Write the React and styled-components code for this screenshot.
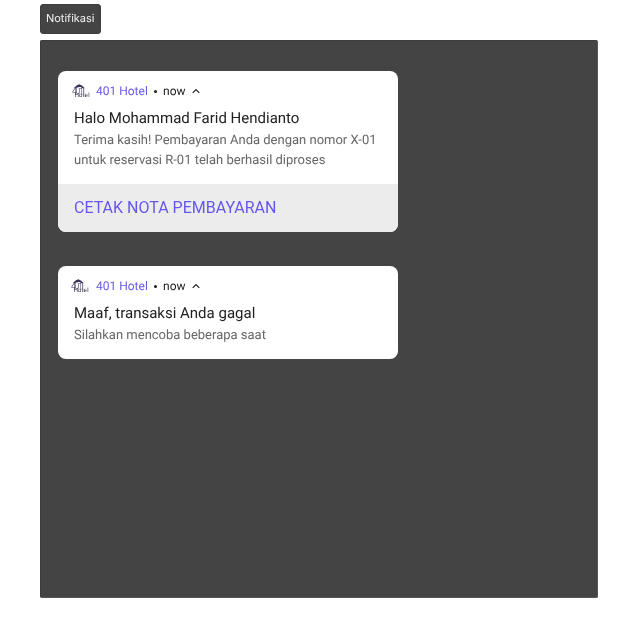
import React from "react";
import styled, { createGlobalStyle } from "styled-components";

const GlobalStyle = createGlobalStyle`
  * { box-sizing: border-box; }
  body { margin: 0; background: #fff; text-rendering: geometricPrecision; -webkit-font-smoothing: antialiased; }
`;

const Page = styled.main`
  width: 638px;
  height: 638px;
  padding: 4px 40px 40px;
  display: flex;
  flex-direction: column;
  align-items: flex-start;
  gap: 6px;
  overflow: hidden;
  font-family: Roboto, sans-serif;
  will-change: transform;
`;

const SectionTag = styled.div`
  width: 60.5px;
  height: 30px;
  display: flex;
  align-items: center;
  justify-content: center;
  border: 1px solid #3d3d3d;
  border-radius: 3px;
  background: #444;
  color: #f0f0f0;
  font: 400 11px/16px Inter, sans-serif;
  padding-bottom: 2px;
`;

const Panel = styled.section`
  width: 558px;
  height: 558px;
  padding: 30px 17px;
  border: 1px solid #3d3d3d;
  border-right-color: #565656;
  border-bottom-color: #565656;
  border-radius: 2px;
  background: #444;
  display: flex;
  flex-direction: column;
  gap: 34px;
`;

const Card = styled.article`
  width: 340px;
  border-radius: 8px;
  background: #fff;
  overflow: hidden;
`;

const CardHeader = styled.header`
  height: 36px;
  padding: 4px 0 0 ${(p) => p.$inset}px;
  display: flex;
  align-items: center;
  font-size: 12px;
  line-height: 16px;
  color: #212121;
`;

const AppName = styled.span`
  width: 57px;
  margin-left: ${(p) => p.$gap}px;
  color: #6658ea;
`;

const Dot = styled.span`
  width: 3px;
  height: 3px;
  margin: 1px 6px 0 1px;
  border-radius: 50%;
  background: #212121;
`;

const Caret = styled.svg`
  margin: 0 0 0 6px;
  display: block;
`;

const Logo = styled.svg`
  display: block;
  flex: none;
`;

const CardBody = styled.div`
  padding: 0 16px 13px;
`;

const Title = styled.h2`
  margin: 0 0 2px;
  font-size: 15px;
  font-weight: 400;
  line-height: 22px;
  color: #212121;
`;

const Message = styled.p`
  margin: 0;
  font-size: 13px;
  line-height: 20px;
  color: #666;
  white-space: pre-line;
`;

const Action = styled.button`
  display: block;
  width: 100%;
  height: 48px;
  padding: 0 16px;
  border: 0;
  background: #ececec;
  color: #6658ea;
  font: 400 16px/24px Roboto, sans-serif;
  text-align: left;
`;

function HotelLogo() {
  return (
    <Logo width="18" height="14" viewBox="0 0 18 14" aria-label="401 Hotel">
      <path d="M2.2 3.8 4.6 1.5 7.2.3 9.8 1.5l2.5 2.3v.5h-1.8L8.9 3H5.5L4 4.3H2.2z" fill="#34315d" />
      <path d="M11.7 3.7v5.5" stroke="#34315d" strokeWidth=".7" />
      <text x="0" y="9.8" fontFamily="Roboto, sans-serif" fontSize="9" fontWeight="300" textLength="12" fill="#34315d">401</text>
      <text x="2.5" y="12.9" fontFamily="Liberation Sans, sans-serif" fontSize="6.2" textLength="15" fill="#25243c">Hotel</text>
    </Logo>
  );
}

function Notification({ inset = 14, title, message, action }) {
  return (
    <Card>
      <CardHeader $inset={inset}>
        <HotelLogo />
        <AppName $gap={20 - inset}>401 Hotel</AppName>
        <Dot />
        <span>now</span>
        <Caret width="8" height="6" viewBox="0 0 8 6" fill="none">
          <path d="M.7 4.8 4 1.5l3.3 3.3" stroke="#212121" strokeWidth="1.2" />
        </Caret>
      </CardHeader>
      <CardBody>
        <Title>{title}</Title>
        <Message>{message}</Message>
      </CardBody>
      {action && <Action type="button">{action}</Action>}
    </Card>
  );
}

export default function App() {
  return (
    <>
      <GlobalStyle />
      <Page>
        <SectionTag>Notifikasi</SectionTag>
        <Panel>
          <Notification
            title="Halo Mohammad Farid Hendianto"
            message={"Terima kasih! Pembayaran Anda dengan nomor X-01\nuntuk reservasi R-01 telah berhasil diproses"}
            action="CETAK NOTA PEMBAYARAN"
          />
          <Notification
            inset={13}
            title="Maaf, transaksi Anda gagal"
            message="Silahkan mencoba beberapa saat"
          />
        </Panel>
      </Page>
    </>
  );
}
